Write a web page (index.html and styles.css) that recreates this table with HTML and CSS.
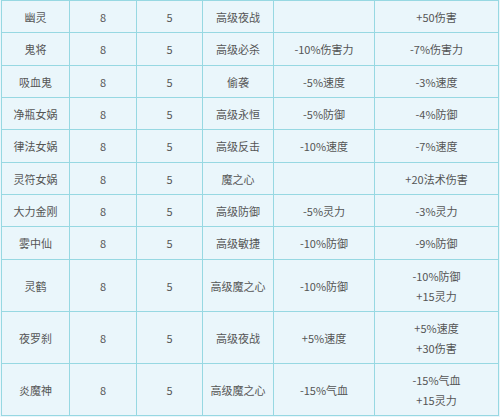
FILE: index.html
```html
<!DOCTYPE html>
<html lang="zh">
<head>
<meta charset="utf-8">
<link rel="stylesheet" href="styles.css">
</head>
<body>
<table class="pets">
<colgroup>
<col class="c1"><col class="c2"><col class="c3"><col class="c4"><col class="c5"><col class="c6">
</colgroup>
<tbody>
<tr class="h32"><td>幽灵</td><td>8</td><td>5</td><td>高级夜战</td><td></td><td>+50伤害</td></tr>
<tr class="h33"><td>鬼将</td><td>8</td><td>5</td><td>高级必杀</td><td>-10%伤害力</td><td>-7%伤害力</td></tr>
<tr class="h32"><td>吸血鬼</td><td>8</td><td>5</td><td>偷袭</td><td>-5%速度</td><td>-3%速度</td></tr>
<tr class="h32"><td>净瓶女娲</td><td>8</td><td>5</td><td>高级永恒</td><td>-5%防御</td><td>-4%防御</td></tr>
<tr class="h33"><td>律法女娲</td><td>8</td><td>5</td><td>高级反击</td><td>-10%速度</td><td>-7%速度</td></tr>
<tr class="h32"><td>灵符女娲</td><td>8</td><td>5</td><td>魔之心</td><td></td><td>+20法术伤害</td></tr>
<tr class="h32"><td>大力金刚</td><td>8</td><td>5</td><td>高级防御</td><td>-5%灵力</td><td>-3%灵力</td></tr>
<tr class="h33"><td>雾中仙</td><td>8</td><td>5</td><td>高级敏捷</td><td>-10%防御</td><td>-9%防御</td></tr>
<tr class="h52"><td>灵鹤</td><td>8</td><td>5</td><td>高级魔之心</td><td>-10%防御</td><td>-10%防御<br>+15灵力</td></tr>
<tr class="h52"><td>夜罗刹</td><td>8</td><td>5</td><td>高级夜战</td><td>+5%速度</td><td>+5%速度<br>+30伤害</td></tr>
<tr class="h52"><td>炎魔神</td><td>8</td><td>5</td><td>高级魔之心</td><td>-15%气血</td><td>-15%气血<br>+15灵力</td></tr>
</tbody>
</table>
</body>
</html>
```
FILE: styles.css
```css
html, body {
  margin: 0;
  padding: 0;
  background: #eaf6fb;
}
.pets {
  margin-left: 1px;
  width: 498px;
  table-layout: fixed;
  border-collapse: collapse;
  background: #eaf6fb;
  font-family: "Noto Sans CJK SC", "Noto Sans", sans-serif;
  font-size: 11px;
  line-height: 20px;
  color: #555555;
}
.c1 { width: 68px; }
.c2 { width: 67px; }
.c3 { width: 66px; }
.c4 { width: 71px; }
.c5 { width: 101px; }
.c6 { width: 124px; }
.pets td {
  border: 1px solid #97d8e2;
  text-align: center;
  vertical-align: middle;
  padding: 0;
}
.h32 td { height: 31px; }
.h33 td { height: 32px; }
.h52 td { height: 51px; }
```
